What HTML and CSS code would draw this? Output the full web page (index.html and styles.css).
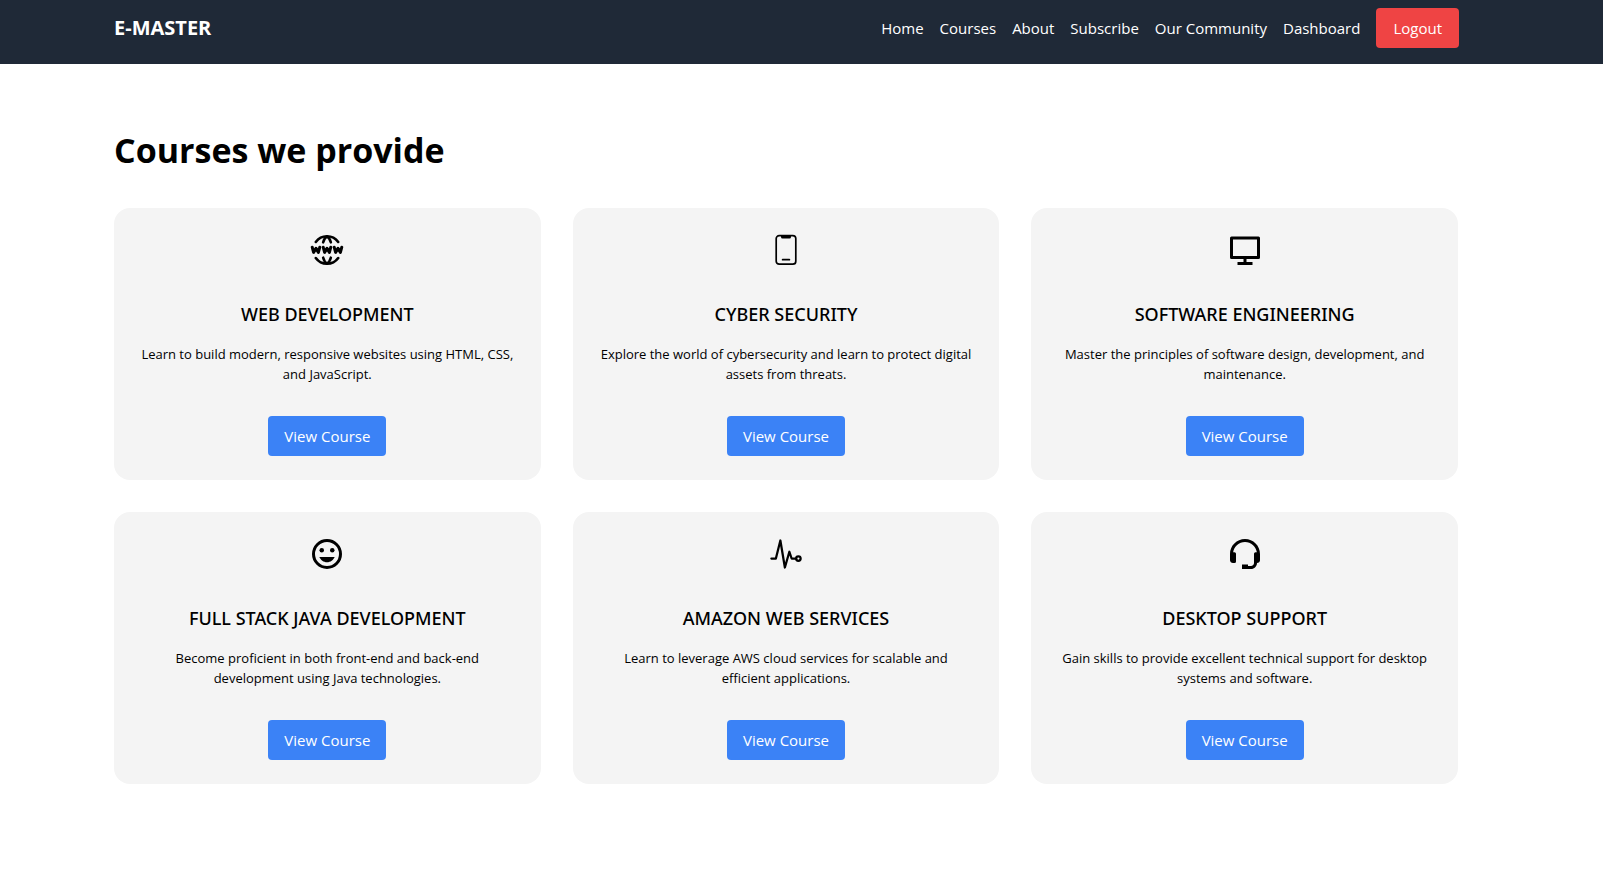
FILE: index.html
```html
<!DOCTYPE html>
<html lang="en">
<head>
<meta charset="utf-8">
<meta name="viewport" content="width=device-width, initial-scale=1">
<title>E-MASTER</title>
<link rel="stylesheet" href="styles.css">
</head>
<body>
<header class="site-header">
  <div class="brand">E-MASTER</div>
  <nav class="nav">
    <a href="#">Home</a>
    <a href="#">Courses</a>
    <a href="#">About</a>
    <a href="#">Subscribe</a>
    <a href="#">Our Community</a>
    <a href="#">Dashboard</a>
    <button class="btn btn-logout" type="button">Logout</button>
  </nav>
</header>
<main class="courses">
  <h1>Courses we provide</h1>
  <div class="grid">
    <article class="card">
      <svg class="icon" viewBox="0 0 36 36" fill="none" stroke="currentColor" stroke-width="2.6" stroke-linecap="round" stroke-linejoin="round" aria-hidden="true">
        <path d="M6.800 10A13.800 13.800 0 0 1 29.200 10M6.800 26A13.800 13.800 0 0 0 29.200 26"/>
        <path d="M14.200 10.300Q15.300 6 18 4.400Q20.700 6 21.800 10.300M14.200 25.700Q15.300 30 18 31.600Q20.700 30 21.800 25.700"/>
        <path stroke-width="3" d="M3.200 15.200l1.400 5.200L7 16.300l2.400 4.100 1.400-5.200M14.200 15.200l1.400 5.200L18 16.300l2.400 4.100 1.400-5.200M25.200 15.200l1.400 5.200L29 16.300l2.400 4.100 1.400-5.200"/>
      </svg>
      <h2>WEB DEVELOPMENT</h2>
      <p>Learn to build modern, responsive websites using HTML, CSS, and JavaScript.</p>
      <button class="btn" type="button">View Course</button>
    </article>
    <article class="card">
      <svg class="icon" viewBox="0 0 36 36" fill="none" stroke="currentColor" stroke-width="1.700" stroke-linecap="round" aria-hidden="true">
        <rect x="8.200" y="3.600" width="19.600" height="28.600" rx="3"/>
        <path d="M13 3.500h10v1.500a1.500 1.500 0 0 1-1.500 1.500h-7A1.500 1.500 0 0 1 13 5z" fill="currentColor" stroke="none"/>
        <path d="M14.600 27.700h6.800"/>
      </svg>
      <h2>CYBER SECURITY</h2>
      <p>Explore the world of cybersecurity and learn to protect digital assets from threats.</p>
      <button class="btn" type="button">View Course</button>
    </article>
    <article class="card">
      <svg class="icon" viewBox="0 0 36 36" fill="none" stroke="currentColor" stroke-width="3" stroke-linejoin="round" aria-hidden="true">
        <rect x="4.500" y="6" width="27" height="19.500"/>
        <path d="M18 26v5M10.500 31.500h15"/>
      </svg>
      <h2>SOFTWARE ENGINEERING</h2>
      <p>Master the principles of software design, development, and maintenance.</p>
      <button class="btn" type="button">View Course</button>
    </article>
    <article class="card">
      <svg class="icon" viewBox="0 0 24 24" fill="currentColor" aria-hidden="true">
        <circle cx="12" cy="12" r="9" fill="none" stroke="currentColor" stroke-width="2"/>
        <circle cx="8.500" cy="9.500" r="1.500"/>
        <circle cx="15.500" cy="9.500" r="1.500"/>
        <path d="M12 17.500c2.330 0 4.310-1.460 5.110-3.500H6.890c.8 2.040 2.780 3.500 5.110 3.500z"/>
      </svg>
      <h2>FULL STACK JAVA DEVELOPMENT</h2>
      <p>Become proficient in both front-end and back-end development using Java technologies.</p>
      <button class="btn" type="button">View Course</button>
    </article>
    <article class="card">
      <svg class="icon" viewBox="0 0 512 512" fill="none" stroke="currentColor" stroke-width="32" stroke-linecap="round" stroke-linejoin="round" aria-hidden="true">
        <path d="M48 320h64l64-256 64 384 64-224 32 96h64"/>
        <circle cx="432" cy="320" r="32"/>
      </svg>
      <h2>AMAZON WEB SERVICES</h2>
      <p>Learn to leverage AWS cloud services for scalable and efficient applications.</p>
      <button class="btn" type="button">View Course</button>
    </article>
    <article class="card">
      <svg class="icon" viewBox="0 0 24 24" fill="currentColor" aria-hidden="true">
        <path d="M12 2C6.486 2 2 6.486 2 12v4.143C2 17.167 2.897 18 4 18h1a1 1 0 0 0 1-1v-5.143a1 1 0 0 0-1-1h-.908C4.648 6.987 7.978 4 12 4s7.352 2.987 7.908 6.857H19a1 1 0 0 0-1 1V18c0 1.103-.897 2-2 2h-2v-1h-4v3h6c2.206 0 4-1.794 4-4 1.103 0 2-.833 2-1.857V12c0-5.514-4.486-10-10-10z"/>
      </svg>
      <h2>DESKTOP SUPPORT</h2>
      <p>Gain skills to provide excellent technical support for desktop systems and software.</p>
      <button class="btn" type="button">View Course</button>
    </article>
  </div>
</main>
</body>
</html>
```
FILE: styles.css
```css
* { box-sizing: border-box; margin: 0; padding: 0; }

body {
  background: #fff;
  color: #000;
  font-family: "Segoe UI", "Open Sans", "Noto Sans", sans-serif;
  font-size: 15px;
  line-height: 24px;
}

.site-header {
  display: flex;
  flex-wrap: wrap;
  align-items: center;
  justify-content: space-between;
  padding: 8px 144px 16px 114px;
  background: #1f2937;
  color: #fff;
}

.brand { font-size: 20px; font-weight: 700; line-height: 28px; }

.nav { display: flex; flex-wrap: wrap; align-items: center; gap: 16px; }
.nav a { color: inherit; text-decoration: none; }

.btn {
  padding: 8px 16px;
  border: 0;
  border-radius: 4px;
  background: #3b82f6;
  color: #fff;
  font: inherit;
  cursor: pointer;
}
.btn-logout { padding: 8px 17px; background: #ef4444; }

.courses { padding: 64px 145px 64px 114px; }
.courses h1 { margin-bottom: 36px; font-size: 34px; font-weight: 700; line-height: 44px; }

.grid {
  display: grid;
  grid-template-columns: repeat(auto-fit, minmax(320px, 1fr));
  gap: 32px;
}

.card {
  display: flex;
  flex-direction: column;
  align-items: center;
  padding: 24px 26px;
  border-radius: 16px;
  background: #f4f4f4;
  text-align: center;
}
.icon { width: 36px; height: 36px; margin-bottom: 32px; }
.card h2 { margin-bottom: 16px; font-family: "Segoe UI", "Noto Sans", sans-serif; font-size: 18px; font-weight: 500; line-height: 28px; }
.card p { margin-bottom: 32px; font-size: 13px; line-height: 20px; }
```
